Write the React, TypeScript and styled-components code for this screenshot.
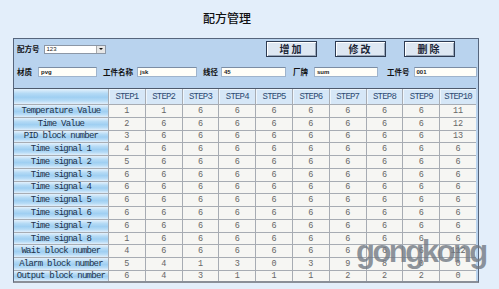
import React from "react";
import styled, { createGlobalStyle } from "styled-components";

const GlobalStyle = createGlobalStyle`
  html, body {
    margin: 0;
    padding: 0;
    width: 499px;
    height: 289px;
    overflow: hidden;
    background: #e3eefa;
  }
  body {
    font-family: "Liberation Sans", "Noto Sans CJK SC", sans-serif;
  }
`;

const Page = styled.div`
  position: relative;
  width: 499px;
  height: 289px;
  padding-top: 9px;
  box-sizing: border-box;
`;

const Title = styled.h1`
  margin: 0 0 0 203px;
  height: 29px;
  font-family: "Noto Sans CJK SC", sans-serif;
  font-size: 12px;
  font-weight: 500;
  line-height: 17px;
  color: #111;
`;

const Panel = styled.div`
  margin-left: 13px;
  width: 466px;
  height: 245px;
  box-sizing: border-box;
  border: 1px solid #56657c;
  border-bottom: 2px solid #8a8f98;
  background: #b9d3ee;
  display: flex;
  flex-direction: column;
`;

const Toolbar = styled.div`
  height: 49px;
  display: flex;
  flex-direction: column;
  padding: 1px 0 0 3px;
  box-sizing: border-box;
`;

const TopRow = styled.div`
  height: 18px;
  display: flex;
  align-items: center;
  padding-right: 23px;
`;

const FieldRow = styled.div`
  margin-top: 8px;
  height: 12px;
  display: flex;
  align-items: center;
`;

const Label = styled.span<{ $gap?: number }>`
  font-family: "Noto Sans CJK SC", sans-serif;
  font-size: 7.5px;
  font-weight: 700;
  color: #111;
  line-height: 10px;
  margin-left: ${(p) => p.$gap ?? 0}px;
  white-space: nowrap;
`;

const Select = styled.div`
  margin-left: 4px;
  width: 62px;
  height: 9px;
  box-sizing: border-box;
  border: 1px solid #8c97a6;
  background: #fff;
  display: flex;
  align-items: center;
  justify-content: space-between;
  font-family: "Liberation Sans", sans-serif;
  font-size: 6px;
  color: #222;
  padding-left: 2px;
`;

const Arrow = styled.span`
  width: 8px;
  height: 7px;
  background: #e6e6e6;
  border-left: 1px solid #aaa;
  display: flex;
  align-items: center;
  justify-content: center;
  &::after {
    content: "";
    border-left: 2px solid transparent;
    border-right: 2px solid transparent;
    border-top: 2px solid #111;
  }
`;

const Buttons = styled.div`
  margin-left: auto;
  display: flex;
  gap: 18px;
`;

const Button = styled.button`
  width: 51px;
  height: 16px;
  padding: 0;
  box-sizing: border-box;
  border: 1px solid #2d3b52;
  box-shadow: inset 1px 1px 0 #ffffff, inset -1px -1px 0 #9aa8ba;
  background: #dde7f2;
  font-family: "Noto Sans CJK SC", sans-serif;
  font-size: 10px;
  font-weight: 700;
  line-height: 12px;
  letter-spacing: 2px;
  color: #1b2536;
`;

const Input = styled.div<{ $w: number; $ml: number }>`
  margin-left: ${(p) => p.$ml}px;
  width: ${(p) => p.$w}px;
  height: 10px;
  box-sizing: border-box;
  border: 1px solid #9fb4cc;
  border-top-color: #7b8da4;
  background: #fffef8;
  font-family: "Liberation Sans", sans-serif;
  font-size: 6px;
  font-weight: 700;
  line-height: 8px;
  color: #222;
  padding-left: 2px;
`;

const Grid = styled.div`
  flex: 1;
  display: grid;
  grid-template-columns: 94px repeat(10, 1fr);
  grid-template-rows: 15px repeat(13, 1fr);
  gap: 1px;
  background: #a7acb3;
  border-top: 1px solid #4e5a6c;
  margin-right: 2px;
`;

const LabelCell = styled.div`
  background: linear-gradient(
    to bottom,
    #e4f1fc 0%,
    #b4daf5 30%,
    #9fcff2 55%,
    #b6dbf6 78%,
    #e1effb 100%
  );
  display: flex;
  align-items: center;
  justify-content: center;
  font-family: "Liberation Mono", monospace;
  font-size: 9px;
  letter-spacing: -0.75px;
  color: #22324a;
  white-space: nowrap;
`;

const HeadCell = styled.div`
  background: #d6e7f7;
  box-shadow: inset 1px 1px 0 #eef6fd;
  display: flex;
  align-items: center;
  justify-content: center;
  font-family: "Liberation Mono", monospace;
  font-size: 9px;
  letter-spacing: -0.8px;
  color: #2e4c74;
`;

const Cell = styled.div`
  background: #f6f6f3;
  display: flex;
  align-items: center;
  justify-content: center;
  font-family: "Liberation Mono", monospace;
  font-size: 8.5px;
  color: #666;
`;

const Watermark = styled.div`
  position: absolute;
  left: 356px;
  top: 236px;
  font-family: "Liberation Sans", sans-serif;
  font-size: 31px;
  line-height: 31px;
  font-weight: 700;
  letter-spacing: -2.5px;
  color: rgba(112, 120, 130, 0.78);
  pointer-events: none;
`;

const rows: [string, number[]][] = [
  ["Temperature Value", [1, 1, 6, 6, 6, 6, 6, 6, 6, 11]],
  ["Time Value", [2, 6, 6, 6, 6, 6, 6, 6, 6, 12]],
  ["PID block number", [3, 6, 6, 6, 6, 6, 6, 6, 6, 13]],
  ["Time signal 1", [4, 6, 6, 6, 6, 6, 6, 6, 6, 6]],
  ["Time signal 2", [5, 6, 6, 6, 6, 6, 6, 6, 6, 6]],
  ["Time signal 3", [6, 6, 6, 6, 6, 6, 6, 6, 6, 6]],
  ["Time signal 4", [6, 6, 6, 6, 6, 6, 6, 6, 6, 6]],
  ["Time signal 5", [6, 6, 6, 6, 6, 6, 6, 6, 6, 6]],
  ["Time signal 6", [6, 6, 6, 6, 6, 6, 6, 6, 6, 6]],
  ["Time signal 7", [6, 6, 6, 6, 6, 6, 6, 6, 6, 6]],
  ["Time signal 8", [1, 6, 6, 6, 6, 6, 6, 6, 6, 6]],
  ["Wait block number", [4, 6, 6, 6, 6, 6, 6, 6, 6, 112]],
  ["Alarm block number", [5, 4, 1, 3, 0, 3, 9, 8, 0, 0]],
  ["Output block number", [6, 4, 3, 1, 1, 1, 2, 2, 2, 0]],
];

const fields = [
  { label: "材质", value: "pvg", w: 59, gap: 0, ml: 6 },
  { label: "工件名称", value: "jsk", w: 60, gap: 6, ml: 4 },
  { label: "线径", value: "45", w: 65, gap: 6, ml: 3 },
  { label: "厂牌", value: "sum", w: 64, gap: 7, ml: 6 },
  { label: "工件号", value: "001", w: 63, gap: 9, ml: 4 },
];

const steps = Array.from({ length: 10 }, (_, i) => `STEP${i + 1}`);

export default function App() {
  return (
    <Page>
      <GlobalStyle />
      <Title>配方管理</Title>
      <Panel>
        <Toolbar>
          <TopRow>
            <Label>配方号</Label>
            <Select>
              123
              <Arrow />
            </Select>
            <Buttons>
              <Button>增加</Button>
              <Button>修改</Button>
              <Button>删除</Button>
            </Buttons>
          </TopRow>
          <FieldRow>
            {fields.map((f) => (
              <React.Fragment key={f.label}>
                <Label $gap={f.gap}>{f.label}</Label>
                <Input $w={f.w} $ml={f.ml}>
                  {f.value}
                </Input>
              </React.Fragment>
            ))}
          </FieldRow>
        </Toolbar>
        <Grid>
          <LabelCell />
          {steps.map((s) => (
            <HeadCell key={s}>{s}</HeadCell>
          ))}
          {rows.map(([name, vals]) => (
            <React.Fragment key={name}>
              <LabelCell>{name}</LabelCell>
              {vals.map((v, i) => (
                <Cell key={i}>{v}</Cell>
              ))}
            </React.Fragment>
          ))}
        </Grid>
      </Panel>
      <Watermark>gongkong</Watermark>
    </Page>
  );
}
